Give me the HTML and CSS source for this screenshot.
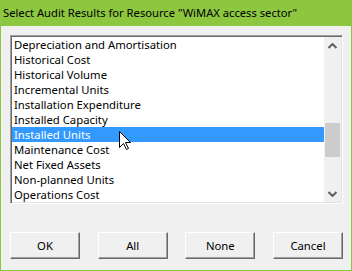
FILE: index.html
```html
<!DOCTYPE html>
<html lang="en">
<head>
    <meta charset="UTF-8">
    <title>Select Audit Results</title>
    <link rel="stylesheet" href="styles.css">
</head>
<body>
    <div class="window">
        <div class="titlebar">Select Audit Results for Resource "WiMAX access sector"</div>

        <div class="content">
            <div class="listbox">
                <ul class="items">
                    <li>Depreciation and Amortisation</li>
                    <li>Historical Cost</li>
                    <li>Historical Volume</li>
                    <li>Incremental Units</li>
                    <li>Installation Expenditure</li>
                    <li>Installed Capacity</li>
                    <li class="selected">Installed Units</li>
                    <li>Maintenance Cost</li>
                    <li>Net Fixed Assets</li>
                    <li>Non-planned Units</li>
                    <li>Operations Cost</li>
                </ul>
                <div class="scrollbar">
                    <div class="arrow">
                        <svg width="9" height="6" viewBox="0 0 9 6"><path d="M0.5 5 L4.5 1 L8.5 5" fill="none" stroke="#606060" stroke-width="2"/></svg>
                    </div>
                    <div class="track">
                        <div class="thumb"></div>
                    </div>
                    <div class="arrow">
                        <svg width="9" height="6" viewBox="0 0 9 6"><path d="M0.5 1 L4.5 5 L8.5 1" fill="none" stroke="#606060" stroke-width="2"/></svg>
                    </div>
                </div>
            </div>

            <div class="buttons">
                <button>OK</button>
                <button>All</button>
                <button>None</button>
                <button>Cancel</button>
            </div>
        </div>

        <!-- mouse pointer over the selected row -->
        <svg class="cursor" width="13" height="20" viewBox="0 0 13 20">
            <polygon points="0.5,0.5 0.5,16.5 4.5,12.5 7.5,18.5 9.5,17.5 6.5,11.5 11.5,11.5" fill="#fff" stroke="#000" stroke-width="1"/>
        </svg>
    </div>
</body>
</html>
```

FILE: styles.css
```css
body {
    margin: 0;
    font-family: "Noto Sans", "Liberation Sans", sans-serif;
    font-size: 11px;
    color: #000;
}
.window {
    position: relative;
    width: 352px;
    height: 271px;
    box-sizing: border-box;
    border: 1px solid #8dc63f;
    border-top: 0;
    background-color: #f0f0f0;
}
.titlebar {
    height: 26px;
    line-height: 25px;
    padding-left: 3px;
    margin: 0 -1px;
    font-size: 11.2px;
    background-color: #8dc63f;
    white-space: nowrap;
}
.content {
    padding: 9px 8px 0 9px;
}
.listbox {
    display: flex;
    height: 169px;
    box-sizing: border-box;
    border: 1px solid;
    border-color: #a0a0a0 #fff #fff #a0a0a0;
    box-shadow: inset 1px 1px #696969, inset -1px -1px #e3e3e3;
    background-color: #fff;
    padding: 1px;
}
.items {
    flex: 1;
    list-style: none;
    margin: 0;
    padding: 0;
    font-size: 11.3px;
}
.items li {
    height: 15px;
    line-height: 15px;
    padding-left: 2px;
    white-space: nowrap;
}
.items li.selected {
    background-color: #3399ff;
    color: #fff;
}
.scrollbar {
    width: 17px;
    display: flex;
    flex-direction: column;
    background-color: #f0f0f0;
}
.arrow {
    height: 17px;
    display: flex;
    align-items: center;
    justify-content: center;
}
.track {
    flex: 1;
}
.thumb {
    margin: 69px 1px 0 1px;
    height: 34px;
    background-color: #cdcdcd;
}
.buttons {
    display: flex;
    justify-content: space-between;
    margin-top: 28px;
}
button {
    width: 70px;
    height: 27px;
    padding: 0;
    font-family: inherit;
    font-size: 11.3px;
    color: #000;
    background-color: #f0f0f0;
    border: 1px solid;
    border-color: #fff #696969 #696969 #fff;
    box-shadow: inset -1px -1px #a0a0a0;
}
.cursor {
    position: absolute;
    left: 118px;
    top: 131px;
}
```
